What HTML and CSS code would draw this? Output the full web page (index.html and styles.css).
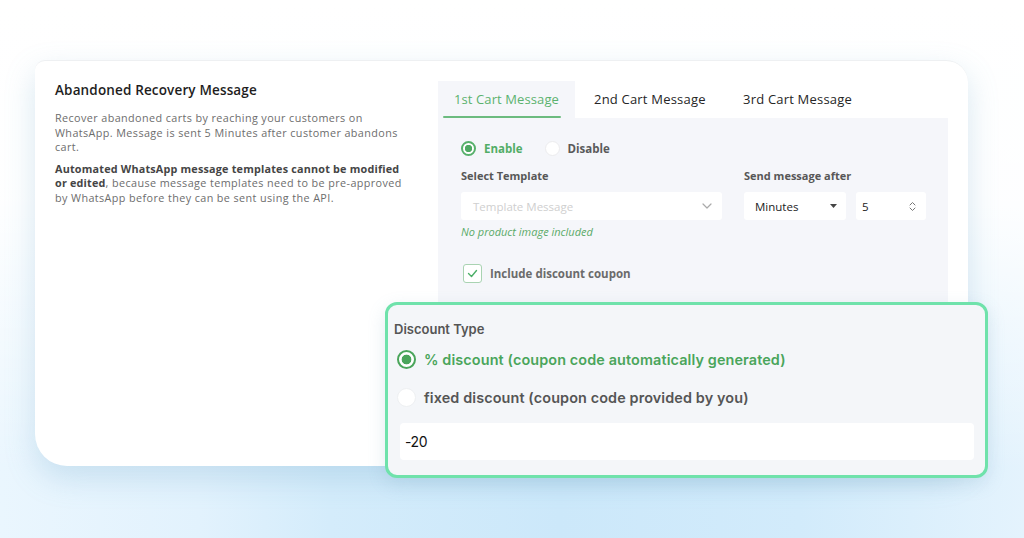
FILE: index.html
```html
<!DOCTYPE html>
<html lang="en">
<head>
<meta charset="utf-8">
<title>Abandoned Recovery Message</title>
<link rel="stylesheet" href="styles.css">
</head>
<body>
<div class="stage">
  <div class="card">
    <div class="intro">
      <h2 class="intro-title">Abandoned Recovery Message</h2>
      <p class="intro-text">Recover abandoned carts by reaching your customers on WhatsApp. Message is sent 5 Minutes after customer abandons cart.</p>
      <p class="intro-text"><strong>Automated WhatsApp message templates cannot be modified or edited</strong>, because message templates need to be pre-approved by WhatsApp before they can be sent using the API.</p>
    </div>
    <div class="settings">
      <div class="tabs">
        <div class="tab tab-active">1st Cart Message</div>
        <div class="tab">2nd Cart Message</div>
        <div class="tab">3rd Cart Message</div>
      </div>
      <div class="panel">
        <div class="radio-row">
          <label class="radio-opt radio-on"><span class="radio"></span>Enable</label>
          <label class="radio-opt"><span class="radio"></span>Disable</label>
        </div>
        <div class="fields">
          <div class="field field-template">
            <div class="field-label">Select Template</div>
            <div class="select">
              <span class="placeholder">Template Message</span>
              <svg class="chev" width="10" height="6" viewBox="0 0 10 6"><path d="M1 1l4 4 4-4" fill="none" stroke="#aaa" stroke-width="1.2" stroke-linecap="round" stroke-linejoin="round"/></svg>
            </div>
            <div class="hint">No product image included</div>
          </div>
          <div class="field field-after">
            <div class="field-label">Send message after</div>
            <div class="after-row">
              <div class="select select-unit">
                <span>Minutes</span>
                <svg width="7" height="4" viewBox="0 0 7 4"><path d="M0 0h7L3.5 4z" fill="#444"/></svg>
              </div>
              <div class="select select-num">
                <span>5</span>
                <svg width="7" height="11" viewBox="0 0 7 11"><path d="M1 4l2.5-2.5L6 4M1 7l2.5 2.5L6 7" fill="none" stroke="#777" stroke-width="1" stroke-linecap="round"/></svg>
              </div>
            </div>
          </div>
        </div>
        <label class="check-row">
          <span class="checkbox"><svg width="11" height="9" viewBox="0 0 11 9"><path d="M1.5 4.5l3 3 5-6" fill="none" stroke="#4caf68" stroke-width="1.4" stroke-linecap="round" stroke-linejoin="round"/></svg></span>
          Include discount coupon
        </label>
      </div>
    </div>
  </div>

  <div class="discount">
    <div class="discount-title">Discount Type</div>
    <label class="d-opt d-on"><span class="d-radio"></span>% discount (coupon code automatically generated)</label>
    <label class="d-opt"><span class="d-radio"></span>fixed discount (coupon code provided by you)</label>
    <div class="d-input">-20</div>
  </div>
</div>
</body>
</html>
```

FILE: styles.css
```css
* { box-sizing: border-box; }
html, body { margin: 0; height: 100%; }
body {
  width: 1024px;
  height: 538px;
  overflow: hidden;
  font-family: "Open Sans", "Liberation Sans", sans-serif;
  background:
    linear-gradient(180deg, #ffffff 0px, rgba(255,255,255,0.95) 200px, rgba(255,255,255,0) 470px),
    linear-gradient(90deg, #eaf6fe 0px, #e2f2fd 200px, #d4ecfb 330px, #cce8fa 560px, #d2ebfb 800px, #e4f3fd 1024px);
}
.stage {
  position: relative;
  width: 1024px;
  height: 538px;
  padding: 60px 0 0 35px;
}
.card {
  width: 933px;
  height: 406px;
  background: #fff;
  border-top: 1px solid #eef0f2;
  border-radius: 10px 22px 28px 32px;
  box-shadow: 0 12px 30px rgba(110,165,200,0.26);
  display: flex;
}
.intro {
  width: 403px;
  padding: 20px 28px 0 20px;
}
.intro-title {
  margin: 0 0 12px;
  font-size: 13.5px;
  font-weight: 600;
  color: #1e1e1e;
  letter-spacing: 0.15px;
}
.intro-text {
  margin: 0 0 7px;
  font-size: 10.8px;
  line-height: 14.6px;
  color: #6d6d6d;
  letter-spacing: 0.4px;
}
.intro-text strong { color: #454545; font-weight: 700; letter-spacing: 0.2px; }

.settings {
  width: 510px;
  padding-top: 20px;
}
.tabs {
  display: flex;
  height: 37px;
}
.tab {
  padding: 0 0 0 19px;
  font-size: 13px;
  color: #262626;
  line-height: 37px;
  width: 149px;
  letter-spacing: 0.2px;
}
.tab-active {
  width: 137px;
  padding-left: 16px;
  background: #f5f6fa;
  color: #5bb26e;
  position: relative;
  letter-spacing: 0.1px;
}
.tab-active::after {
  content: "";
  position: absolute;
  left: 5px;
  width: 118px;
  bottom: 0;
  height: 2px;
  border-radius: 1px;
  background: #6cbb7f;
}
.panel {
  background: #f5f6fa;
  height: 196px;
  padding: 22px 0 0 23px;
}
.radio-row {
  display: flex;
  align-items: center;
  gap: 22px;
  height: 15px;
  margin-top: 1px;
}
.radio-opt {
  display: flex;
  align-items: center;
  gap: 8px;
  font-size: 11.5px;
  font-weight: 700;
  color: #5a5a5a;
}
.radio {
  width: 15px;
  height: 15px;
  border-radius: 50%;
  background: #fff;
  border: 1px solid #ececee;
}
.radio-on { color: #52ad66; }
.radio-on .radio {
  border: 2px solid #57b06b;
  background: radial-gradient(circle, #4ea862 0 3.4px, #fff 4px);
}
.fields {
  display: flex;
  margin-top: 12px;
  gap: 22px;
}
.field-label {
  font-size: 11px;
  font-weight: 700;
  color: #575757;
  height: 24px;
  line-height: 15px;
}
.field-template { width: 261px; }
.select {
  height: 28px;
  background: #fff;
  border-radius: 3px;
  display: flex;
  align-items: center;
  justify-content: space-between;
  padding: 0 10px 0 12px;
  font-size: 11.5px;
  color: #222;
}
.placeholder { color: #cfcfcf; font-size: 11.5px; }
.hint {
  margin-top: 4px;
  font-size: 11px;
  font-style: italic;
  color: #5aaa68;
}
.after-row { display: flex; gap: 10px; }
.select-unit { width: 102px; padding: 0 9px 0 11px; }
.select-num { width: 70px; padding: 0 10px 0 6px; }
.check-row {
  margin-top: 25px;
  margin-left: 2px;
  display: flex;
  align-items: center;
  gap: 8px;
  font-size: 11.5px;
  font-weight: 700;
  color: #6b6b6b;
}
.checkbox {
  width: 19px;
  height: 19px;
  border: 1.5px solid #a9d3b2;
  border-radius: 3px;
  background: #fff;
  display: flex;
  align-items: center;
  justify-content: center;
}

.discount {
  position: absolute;
  left: 385px;
  top: 302px;
  width: 603px;
  height: 176px;
  border: 3px solid #6fe2ab;
  border-radius: 12px;
  background: #f4f6f9;
  padding: 16px 11px 0 3px;
  font-family: "Inter", "Liberation Sans", sans-serif;
  box-shadow: 0 6px 18px rgba(100,150,180,0.18);
}
.discount-title {
  font-size: 13px;
  font-weight: 600;
  color: #555;
  margin-left: 3px;
  height: 20px;
}
.d-opt {
  display: flex;
  align-items: center;
  gap: 8px;
  height: 19px;
  margin-top: 9px;
  margin-left: 6px;
  font-size: 14.4px;
  font-weight: 600;
  color: #555;
  letter-spacing: 0.12px;
}
.d-opt + .d-opt { margin-top: 19px; }
.d-radio {
  width: 19px;
  height: 19px;
  border-radius: 50%;
  background: #fff;
  border: 1px solid #eef0f2;
}
.d-on { color: #4aa55b; }
.d-on .d-radio {
  border: 2px solid #4aa55b;
  background: radial-gradient(circle, #4aa55b 0 4.5px, #fff 5.2px);
}
.d-input {
  margin-top: 16px;
  margin-left: 9px;
  height: 37px;
  background: #fff;
  border-radius: 4px;
  padding-left: 5px;
  line-height: 37px;
  font-size: 14px;
  color: #111;
  letter-spacing: -0.4px;
}
```
